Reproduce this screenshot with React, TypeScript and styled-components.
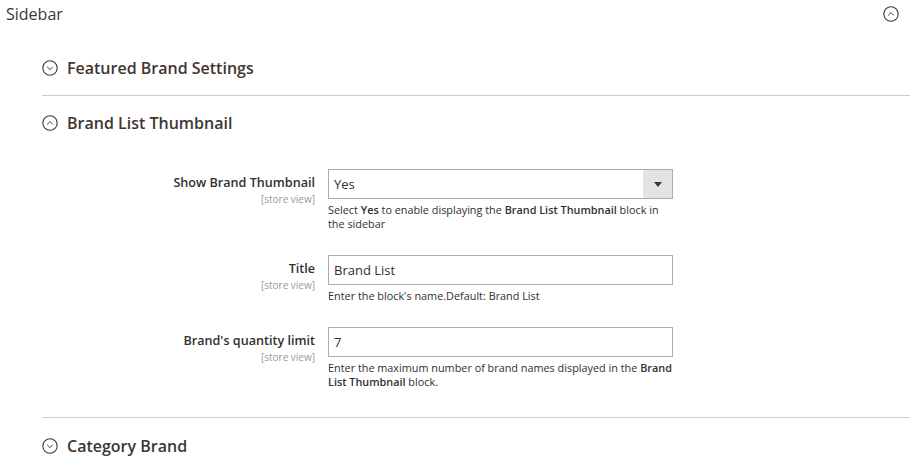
import React from "react";
import styled, { createGlobalStyle } from "styled-components";

const Global = createGlobalStyle`
  html, body { margin: 0; padding: 0; background: #fff; }
  body { font-family: "Open Sans", "Noto Sans", sans-serif; color: #303030; }
  * { box-sizing: border-box; }
`;

const Page = styled.div`
  width: 920px;
  padding: 0 10px 0 6px;
`;

const SectionHeader = styled.div`
  display: flex;
  align-items: center;
  justify-content: space-between;
  height: 28px;
  margin-bottom: 13px;
  padding-right: 11px;
`;

const SectionTitle = styled.span`
  font-size: 16px;
  font-weight: 500;
  color: #41362f;
  line-height: 28px;
`;

const Body = styled.div`
  padding-left: 36px;
`;

const Group = styled.div<{ $last?: boolean }>`
  border-bottom: ${(p) => (p.$last ? "none" : "1px solid #cccccc")};
`;

const GroupHeader = styled.div<{ $pt: number }>`
  display: flex;
  align-items: center;
  gap: 9px;
  padding: ${(p) => p.$pt}px 0 17px;
  height: ${(p) => p.$pt + 17 + 20}px;
`;

const GroupTitle = styled.span`
  font-size: 16px;
  font-weight: 600;
  color: #41362f;
  line-height: 20px;
`;

const Fields = styled.div`
  display: flex;
  flex-direction: column;
  gap: 24px;
  padding: 19px 0 28px;
`;

const Row = styled.div`
  display: grid;
  grid-template-columns: 273px 345px;
  column-gap: 13px;
`;

const LabelCol = styled.div`
  text-align: right;
  padding-top: 5px;
`;

const Label = styled.div`
  font-size: 12.6px;
  font-weight: 600;
  color: #303030;
  line-height: 18px;
`;

const Scope = styled.div`
  font-size: 10px;
  color: #999999;
  line-height: 12px;
  margin-top: 1px;
`;

const Control = styled.div`
  display: flex;
  flex-direction: column;
`;

const Box = styled.div`
  height: 30px;
  border: 1px solid #adadad;
  display: flex;
  align-items: stretch;
  font-size: 13px;
  color: #303030;
  background: #fff;
`;

const Value = styled.span`
  flex: 1;
  padding: 0 5px;
  line-height: 28px;
`;

const Arrow = styled.span`
  width: 29px;
  background: #e3e3e3;
  display: flex;
  align-items: center;
  justify-content: center;
  &::after {
    content: "";
    border-left: 4px solid transparent;
    border-right: 4px solid transparent;
    border-top: 5px solid #41362f;
  }
`;

const Note = styled.div`
  font-size: 10.85px;
  line-height: 14px;
  color: #303030;
  margin-top: 4px;
  b { font-weight: 600; }
`;

const Circle = ({ up }: { up?: boolean }) => (
  <svg width="16" height="16" viewBox="0 0 16 16">
    <circle cx="8" cy="8" r="7.2" fill="none" stroke="#41362f" strokeWidth="1.1" />
    {up ? (
      <path d="M5.2 9.4 L8 6.6 L10.8 9.4" fill="none" stroke="#41362f" strokeWidth="1" />
    ) : (
      <path d="M5.2 6.8 L8 9.6 L10.8 6.8" fill="none" stroke="#41362f" strokeWidth="1" />
    )}
  </svg>
);

export default function App() {
  return (
    <Page>
      <Global />
      <SectionHeader>
        <SectionTitle>Sidebar</SectionTitle>
        <Circle up />
      </SectionHeader>
      <Body>
        <Group>
          <GroupHeader $pt={17}>
            <Circle />
            <GroupTitle>Featured Brand Settings</GroupTitle>
          </GroupHeader>
        </Group>
        <Group>
          <GroupHeader $pt={17}>
            <Circle up />
            <GroupTitle>Brand List Thumbnail</GroupTitle>
          </GroupHeader>
          <Fields>
            <Row>
              <LabelCol>
                <Label>Show Brand Thumbnail</Label>
                <Scope>[store view]</Scope>
              </LabelCol>
              <Control>
                <Box>
                  <Value>Yes</Value>
                  <Arrow />
                </Box>
                <Note>
                  Select <b>Yes</b> to enable displaying the <b>Brand List Thumbnail</b> block in the sidebar
                </Note>
              </Control>
            </Row>
            <Row>
              <LabelCol>
                <Label>Title</Label>
                <Scope>[store view]</Scope>
              </LabelCol>
              <Control>
                <Box>
                  <Value>Brand List</Value>
                </Box>
                <Note>Enter the block's name.Default: Brand List</Note>
              </Control>
            </Row>
            <Row>
              <LabelCol>
                <Label>Brand's quantity limit</Label>
                <Scope>[store view]</Scope>
              </LabelCol>
              <Control>
                <Box>
                  <Value>7</Value>
                </Box>
                <Note>
                  Enter the maximum number of brand names displayed in the <b>Brand List Thumbnail</b> block.
                </Note>
              </Control>
            </Row>
          </Fields>
        </Group>
        <Group $last>
          <GroupHeader $pt={18}>
            <Circle />
            <GroupTitle>Category Brand</GroupTitle>
          </GroupHeader>
        </Group>
      </Body>
    </Page>
  );
}
